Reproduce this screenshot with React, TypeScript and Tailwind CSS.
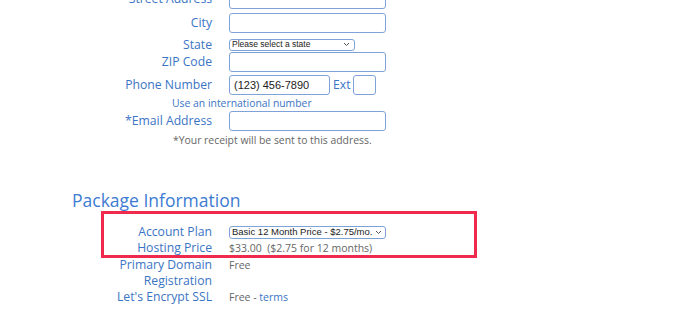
import React from "react";

const labelCls =
  "w-[212px] shrink-0 text-right text-[12.2px] leading-[20px] text-[#3b74c4]";

const inputCls =
  "h-[20px] border border-[#7fa3d8] rounded-[3px] bg-white";

const Chevron: React.FC = () => (
  <svg width="7" height="5" viewBox="0 0 7 5" className="shrink-0">
    <path d="M1 1l2.5 2.5L6 1" fill="none" stroke="#555" strokeWidth="1" />
  </svg>
);

const FormRow: React.FC<{ label: string; children: React.ReactNode; className?: string }> = ({
  label,
  children,
  className,
}) => (
  <div className={"flex items-center gap-[17px] " + (className || "")}>
    <div className={labelCls}>{label}</div>
    {children}
  </div>
);

const PkgRow: React.FC<{ label: React.ReactNode; children?: React.ReactNode }> = ({
  label,
  children,
}) => (
  <div className="flex items-start gap-[17px]">
    <div className="w-[212px] shrink-0 text-right text-[12.2px] leading-[16px] text-[#3b74c4]">
      {label}
    </div>
    <div className="text-[10.5px] leading-[16px] text-[#666] whitespace-nowrap">{children}</div>
  </div>
);

const App: React.FC = () => {
  return (
    <div
      className="relative w-[680px] h-[325px] overflow-hidden bg-white"
      style={{ fontFamily: '"Open Sans", sans-serif' }}
    >
      <div className="-mt-[11px]">
        <FormRow label="Street Address" className="mb-[4px]">
          <div className={inputCls + " w-[157px]"} />
        </FormRow>
        <FormRow label="City" className="mb-[4px]">
          <div className={inputCls + " w-[157px]"} />
        </FormRow>
        <div className="flex items-center gap-[17px] h-[15px]">
          <div className={labelCls}>State</div>
          <div
            className="h-[12px] w-[126px] border border-[#7fa3d8] rounded-[3px] flex items-center justify-between pl-[2px] pr-[4px] text-[8.5px] leading-none text-[#222] whitespace-nowrap"
            style={{ fontFamily: '"Liberation Sans", Arial, sans-serif' }}
          >
            <span>Please select a state</span>
            <Chevron />
          </div>
        </div>
        <FormRow label="ZIP Code" className="mb-[3px]">
          <div className={inputCls + " w-[157px]"} />
        </FormRow>
        <div className="flex items-center gap-[17px]">
          <div className={labelCls}>Phone Number</div>
          <div className="flex items-center">
            <div
              className={inputCls + " w-[101px] flex items-center pl-[4px] text-[11px] text-[#222]"}
              style={{ fontFamily: '"Liberation Sans", Arial, sans-serif' }}
            >
              (123) 456-7890
            </div>
            <span className="ml-[3px] mr-[2px] text-[12.2px] leading-[20px] text-[#3b74c4]">Ext</span>
            <div className={inputCls + " w-[23px]"} />
          </div>
        </div>
        <div className="pl-[172px] text-[10.4px] leading-[16px] text-[#3b74c4]">
          Use an international number
        </div>
        <FormRow label="*Email Address">
          <div className={inputCls + " w-[157px]"} />
        </FormRow>
        <div className="pl-[173px] text-[10.4px] leading-[16px] mt-[1px] text-[#666]">
          *Your receipt will be sent to this address.
        </div>

        <h2 className="pl-[72px] mt-[40px] text-[17.5px] leading-[24px] text-[#3d7bd2]">
          Package Information
        </h2>

        <div className="mt-[12px] flex flex-col">
          <div className="flex items-center gap-[17px]">
            <div className="w-[212px] shrink-0 text-right text-[12.2px] leading-[16px] text-[#3b74c4]">
              Account Plan
            </div>
            <div
              className="h-[13px] w-[157px] border border-[#7fa3d8] rounded-[3px] flex items-center justify-between pl-[2px] pr-[3px] text-[9.5px] leading-none text-[#222] whitespace-nowrap"
              style={{ fontFamily: '"Liberation Sans", Arial, sans-serif' }}
            >
              <span>Basic 12 Month Price - $2.75/mo.</span>
              <Chevron />
            </div>
          </div>
          <PkgRow label="Hosting Price">$33.00&nbsp; ($2.75 for 12 months)</PkgRow>
          <div className="mt-[1px]">
            <PkgRow
              label={
                <>
                  Primary Domain
                  <br />
                  Registration
                </>
              }
            >
              Free
            </PkgRow>
          </div>
          <PkgRow label="Let's Encrypt SSL">
            Free - <span className="text-[#3b74c4]">terms</span>
          </PkgRow>
        </div>
      </div>

      <div className="absolute left-[101px] top-[211px] w-[376px] h-[47px] border-[3px] border-[#ef2a4c]" />
    </div>
  );
};

export default App;
